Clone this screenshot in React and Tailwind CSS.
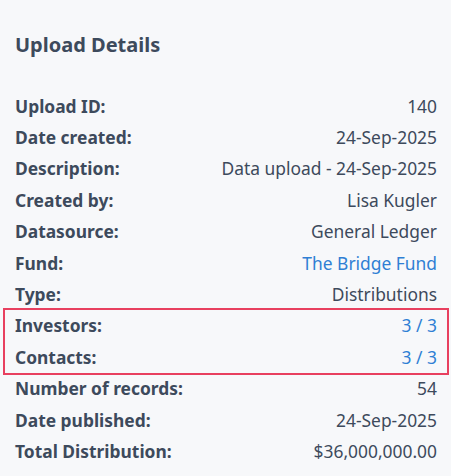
const rows = [
  { label: 'Upload ID:', value: '140' },
  { label: 'Date created:', value: '24-Sep-2025' },
  { label: 'Description:', value: 'Data upload - 24-Sep-2025' },
  { label: 'Created by:', value: 'Lisa Kugler' },
  { label: 'Datasource:', value: 'General Ledger' },
  { label: 'Fund:', value: 'The Bridge Fund', link: true },
  { label: 'Type:', value: 'Distributions' },
];

const highlighted = [
  { label: 'Investors:', value: '3 / 3', link: true },
  { label: 'Contacts:', value: '3 / 3', link: true },
];

const rest = [
  { label: 'Number of records:', value: '54' },
  { label: 'Date published:', value: '24-Sep-2025' },
  { label: 'Total Distribution:', value: '$36,000,000.00' },
];

const Row = ({ label, value, link }) => (
  <div className="flex h-[31.4px] items-center justify-between text-[17.4px]">
    <span className="font-bold">{label}</span>
    {link ? (
      <a href="#" className="text-[#2f7fd4]">{value}</a>
    ) : (
      <span>{value}</span>
    )}
  </div>
);

export default function App() {
  return (
    <div
      className="min-h-[476px] w-[451px] bg-[#f7f8fa] pl-[15px] pr-[14px] pt-[29.5px] text-[#3d4a5c]"
      style={{ fontFamily: '"Noto Sans", "Open Sans", sans-serif' }}
    >
      <h2 className="mb-[30.5px] text-[20px] font-bold leading-[30px]">Upload Details</h2>
      <div>
        {rows.map((r) => (
          <Row key={r.label} {...r} />
        ))}
        <div className="-mx-[12px] -my-[2px] border-2 border-[#e8405f] px-[10px]">
          {highlighted.map((r) => (
            <Row key={r.label} {...r} />
          ))}
        </div>
        {rest.map((r) => (
          <Row key={r.label} {...r} />
        ))}
      </div>
    </div>
  );
}
